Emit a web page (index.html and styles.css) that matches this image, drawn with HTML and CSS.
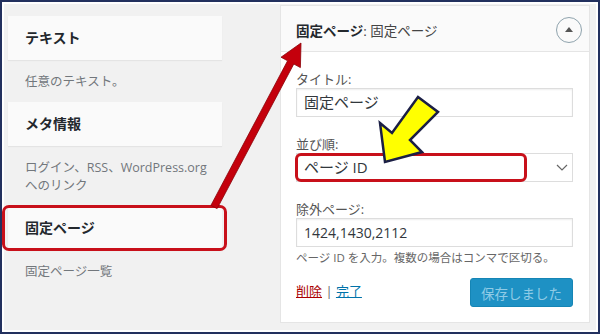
FILE: index.html
```html
<!DOCTYPE html>
<html lang="ja">
<head>
  <meta charset="UTF-8">
  <title>固定ページ ウィジェット</title>
  <link rel="stylesheet" href="styles.css">
</head>
<body>
  <div class="frame">
    <div class="canvas">
      <!-- Available widgets -->
      <aside class="widgets">
        <div class="widget-title">テキスト</div>
        <p class="widget-desc">任意のテキスト。</p>
        <div class="widget-title">メタ情報</div>
        <p class="widget-desc">ログイン、RSS、WordPress.org<br>へのリンク</p>
        <div class="widget-title marked">固定ページ</div>
        <p class="widget-desc">固定ページ一覧</p>
      </aside>

      <!-- Widget settings -->
      <section class="panel">
        <div class="panel-head">
          <span class="panel-title"><b>固定ページ</b>: 固定ページ</span>
          <span class="toggle"><span class="caret"></span></span>
        </div>
        <div class="panel-body">
          <div class="field">
            <div class="field-label">タイトル:</div>
            <div class="text-input">固定ページ</div>
          </div>
          <div class="field">
            <div class="field-label">並び順:</div>
            <div class="text-input select marked-select">
              <span>ページ ID</span>
              <svg class="chevron" width="12" height="7" viewBox="0 0 12 7"><path d="M1 1l5 5 5-5" fill="none" stroke="#666" stroke-width="1.2"/></svg>
            </div>
          </div>
          <div class="field">
            <div class="field-label">除外ページ:</div>
            <div class="text-input numbers">1424,1430,2112</div>
          </div>
          <p class="help">ページ ID を入力。複数の場合はコンマで区切る。</p>
          <div class="actions">
            <div class="links"><a href="#" class="delete">削除</a> | <a href="#" class="done">完了</a></div>
            <button class="save-btn" disabled>保存しました</button>
          </div>
        </div>
      </section>
    </div>

    <!-- Annotation arrows -->
    <svg class="arrows" width="600" height="334" viewBox="0 0 600 334">
      <polygon points="210.9,205.4 287.6,60.8 281,57.2 301,43 300.4,67.6 293.8,64 217.1,208.6" fill="#c4000c" stroke="#8a0008" stroke-width="0.8" stroke-linejoin="round"/>
      <polygon points="418,97 438,112 410,140 422,152 385,162 380,123 392,133" fill="#ffff00" stroke="#1b1f45" stroke-width="2.5" stroke-linejoin="miter"/>
    </svg>
  </div>
</body>
</html>
```

FILE: styles.css
```css
/* Base */
* {
  box-sizing: border-box;
}

body {
  margin: 0;
  width: 600px;
  height: 334px;
  font-family: "Open Sans", "Noto Sans CJK JP", sans-serif;
  color: #32373c;
}

.frame {
  position: relative;
  width: 600px;
  height: 334px;
  border: 2px solid #22305e;
  background: #fff;
  padding: 2px;
}

.canvas {
  display: flex;
  align-items: flex-start;
  height: 100%;
  background: #f1f1f1;
}

/* Left column: widget list */
.widgets {
  width: 276px;
  flex-shrink: 0;
  padding: 12px 0 0 4px;
}

.widget-title {
  position: relative;
  width: 214px;
  height: 44px;
  line-height: 44px;
  padding-left: 17px;
  background: #fafafa;
  box-shadow: 0 1px 1px rgba(0, 0, 0, 0.05);
  font-size: 14px;
  font-weight: bold;
  color: #23282d;
}

.widget-title.marked::after {
  content: "";
  position: absolute;
  top: -1px;
  bottom: -1px;
  left: -6px;
  right: -5px;
  border: 3px solid #c8101a;
  border-radius: 7px;
}

.widget-desc {
  margin: 0;
  padding: 13px 0 11px 17px;
  font-size: 12.5px;
  line-height: 18px;
  color: #72777c;
}

/* Right column: settings panel */
.panel {
  width: 310px;
  margin-top: 1px;
  background: #fff;
  border: 1px solid #e5e5e5;
}

.panel-head {
  display: flex;
  align-items: center;
  justify-content: space-between;
  height: 46px;
  padding: 3px 7px 0 15px;
  background: #fafafa;
  border-bottom: 1px solid #e5e5e5;
}

.panel-title {
  font-size: 13.5px;
  color: #444;
}

.panel-title b {
  color: #23282d;
}

.toggle {
  display: flex;
  align-items: center;
  justify-content: center;
  width: 26px;
  height: 26px;
  border: 1.5px solid #8fa3ad;
  border-radius: 50%;
}

.caret {
  width: 0;
  height: 0;
  border-left: 4px solid transparent;
  border-right: 4px solid transparent;
  border-bottom: 5px solid #555;
  margin-top: -1px;
}

.panel-body {
  padding: 0 16px 15px 15px;
}

.field {
  margin-top: 20px;
}

.field-label {
  font-size: 13px;
  line-height: 14px;
  margin-bottom: 2px;
  color: #555;
}

.text-input {
  position: relative;
  height: 29px;
  line-height: 27px;
  padding: 0 7px;
  border: 1px solid #ddd;
  background: #fff;
  box-shadow: inset 0 1px 2px rgba(0, 0, 0, 0.07);
  font-size: 15px;
  color: #32373c;
}

.text-input.numbers {
  font-size: 14px;
}

.select {
  display: flex;
  align-items: center;
  justify-content: space-between;
  padding-right: 4px;
  box-shadow: none;
}

.marked-select::after {
  content: "";
  position: absolute;
  top: -1px;
  bottom: -1px;
  left: -2px;
  width: 226px;
  border: 3px solid #c8101a;
  border-radius: 6px;
}

.help {
  margin: 3px 0 0;
  font-size: 11.5px;
  line-height: 16px;
  color: #666;
}

.actions {
  display: flex;
  align-items: center;
  justify-content: space-between;
  margin-top: 12px;
}

.links {
  font-size: 13px;
  color: #666;
  margin-top: -4px;
}

.links a {
  text-decoration: underline;
}

.delete {
  color: #a00;
}

.done {
  color: #0073aa;
}

.save-btn {
  width: 103px;
  height: 29px;
  border: 1px solid #1585b5;
  border-radius: 3px;
  background: #1e91c4;
  color: #8fcbe6;
  font-family: inherit;
  font-size: 13.5px;
  padding: 0;
}

/* Overlay arrows */
.arrows {
  position: absolute;
  top: -2px;
  left: -2px;
  pointer-events: none;
}
```
